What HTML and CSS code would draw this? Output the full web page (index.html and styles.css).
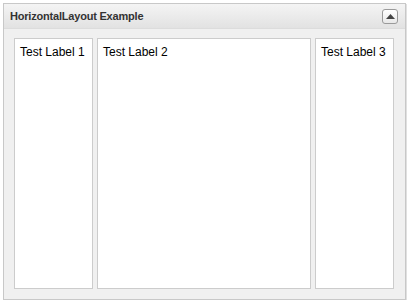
FILE: index.html
```html
<!DOCTYPE html>
<html>
<head>
<meta charset="utf-8">
<link rel="stylesheet" href="styles.css">
</head>
<body>
<div class="panel">
  <div class="header">
    <span class="title">HorizontalLayout Example</span>
    <button class="collapse" aria-label="Collapse">
      <svg width="9" height="5" viewBox="0 0 9 5"><polygon points="0,5 9,5 4.5,0" fill="#444"/></svg>
    </button>
  </div>
  <div class="content">
    <div class="cell narrow"><span class="label">Test Label 1</span></div>
    <div class="cell wide"><span class="label">Test Label 2</span></div>
    <div class="cell narrow"><span class="label">Test Label 3</span></div>
  </div>
</div>
</body>
</html>
```
FILE: styles.css
```css
html, body {
  margin: 0;
  padding: 0;
  background: #ffffff;
}
body {
  padding: 3px 4px 0 3px;
  font-family: "Liberation Sans", Arial, sans-serif;
}
.panel {
  width: 401px;
  height: 295px;
  border: 1px solid #c8c8c8;
  background: #f0f0f0;
  display: flex;
  flex-direction: column;
  box-shadow: 1px 1px 0 #e0e0e0;
}
.header {
  height: 24px;
  border-bottom: 1px solid #dcdcdc;
  background: linear-gradient(#f4f4f4, #e2e2e2);
  display: flex;
  align-items: center;
  justify-content: space-between;
  padding: 0 7px 0 6px;
}
.title {
  font-size: 11px;
  font-weight: bold;
  color: #333333;
  letter-spacing: -0.2px;
}
.collapse {
  width: 16px;
  height: 15px;
  padding: 0;
  border: 1px solid #9a9a9a;
  border-radius: 3px;
  background: linear-gradient(#ffffff, #e8e8e8);
  display: flex;
  align-items: center;
  justify-content: center;
}
.content {
  flex: 1;
  display: flex;
  gap: 4px;
  padding: 9px 11px 10px 10px;
}
.cell {
  background: #ffffff;
  border: 1px solid #cccccc;
  padding: 3px 5px;
}
.narrow {
  width: 67px;
}
.wide {
  flex: 1;
}
.label {
  font-size: 12px;
  color: #000000;
}
```
